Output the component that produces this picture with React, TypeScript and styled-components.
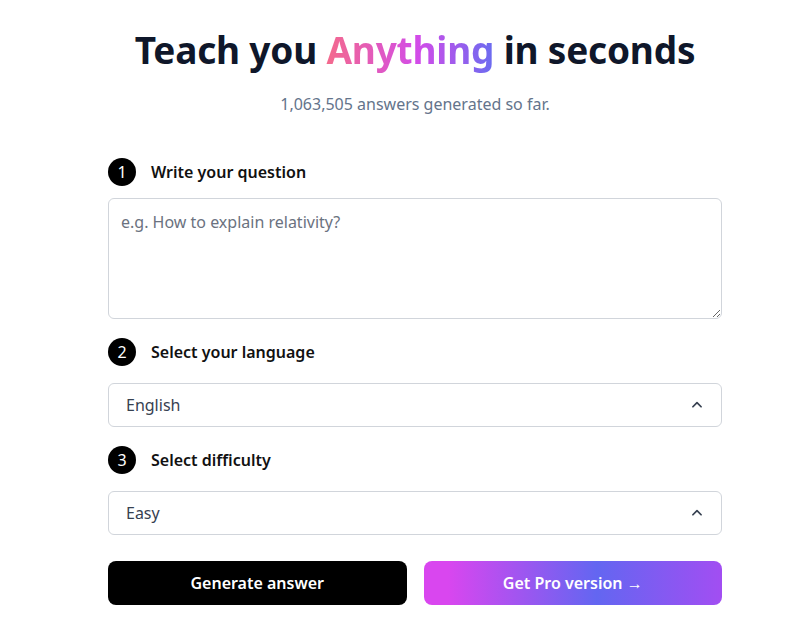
import React from "react";
import styled, { createGlobalStyle } from "styled-components";

const Global = createGlobalStyle`
  html, body { margin: 0; padding: 0; background: #ffffff; }
  body { font-family: "Noto Sans", "Open Sans", sans-serif; color: #111827; }
  * { box-sizing: border-box; }
`;

const Page = styled.main`
  width: 800px;
  padding: 26px 78px 0 108px;
  display: flex;
  flex-direction: column;
  align-items: center;
`;

const Title = styled.h1`
  margin: 0;
  font-size: 37px;
  line-height: 48px;
  font-weight: 700;
  color: #0f172a;
  letter-spacing: -0.2px;
  text-align: center;
`;

const Gradient = styled.span`
  background: linear-gradient(90deg, #f46a8c 0%, #d24ce9 55%, #6a6cf0 100%);
  -webkit-background-clip: text;
  background-clip: text;
  color: transparent;
`;

const Subtitle = styled.p`
  margin: 20px 0 0;
  font-size: 16px;
  line-height: 20px;
  color: #64748b;
`;

const Form = styled.div`
  width: 100%;
  margin-top: 44px;
  display: flex;
  flex-direction: column;
`;

const StepRow = styled.div<{ $top: number }>`
  display: flex;
  align-items: center;
  gap: 15px;
  margin-top: ${(p) => p.$top}px;
  height: 28px;
`;

const Badge = styled.span`
  width: 28px;
  height: 28px;
  border-radius: 50%;
  background: #000;
  color: #fff;
  font-size: 16px;
  display: flex;
  align-items: center;
  justify-content: center;
  line-height: 1;
`;

const StepLabel = styled.span`
  font-size: 16px;
  font-weight: 600;
  color: #111;
`;

const TextArea = styled.textarea`
  margin-top: 12px;
  width: 100%;
  height: 121px;
  border: 1px solid #d1d5db;
  border-radius: 6px;
  padding: 12px 12px;
  font-family: inherit;
  font-size: 16px;
  line-height: 22px;
  color: #111;
  resize: vertical;
  outline: none;
  &::placeholder { color: #6b7280; }
`;

const Select = styled.div`
  margin-top: 17px;
  height: 44px;
  border: 1px solid #d1d5db;
  border-radius: 6px;
  display: flex;
  align-items: center;
  justify-content: space-between;
  padding: 0 17px 0 17px;
  font-size: 16px;
  color: #374151;
`;

const Buttons = styled.div`
  margin-top: 26px;
  display: grid;
  grid-template-columns: 1fr 1fr;
  gap: 17px;
`;

const Button = styled.button<{ $pro?: boolean }>`
  height: 44px;
  border: none;
  border-radius: 8px;
  font-family: inherit;
  font-size: 16px;
  font-weight: 600;
  color: #fff;
  background: ${(p) =>
    p.$pro
      ? "linear-gradient(90deg, #d946ef 8%, #6366f1 58%, #a24ef2 100%)"
      : "#000"};
  cursor: pointer;
`;

const Chevron = () => (
  <svg width="14" height="14" viewBox="0 0 24 24" fill="none" stroke="#374151" strokeWidth="3" strokeLinecap="round" strokeLinejoin="round">
    <path d="M5 15l7-7 7 7" />
  </svg>
);

export default function App() {
  return (
    <>
      <Global />
      <Page>
        <Title>
          Teach you <Gradient>Anything</Gradient> in seconds
        </Title>
        <Subtitle>1,063,505 answers generated so far.</Subtitle>
        <Form>
          <StepRow $top={0}>
            <Badge>1</Badge>
            <StepLabel>Write your question</StepLabel>
          </StepRow>
          <TextArea placeholder="e.g. How to explain relativity?" />
          <StepRow $top={19}>
            <Badge>2</Badge>
            <StepLabel>Select your language</StepLabel>
          </StepRow>
          <Select>
            <span>English</span>
            <Chevron />
          </Select>
          <StepRow $top={19}>
            <Badge>3</Badge>
            <StepLabel>Select difficulty</StepLabel>
          </StepRow>
          <Select>
            <span>Easy</span>
            <Chevron />
          </Select>
          <Buttons>
            <Button>Generate answer</Button>
            <Button $pro>Get Pro version →</Button>
          </Buttons>
        </Form>
      </Page>
    </>
  );
}
